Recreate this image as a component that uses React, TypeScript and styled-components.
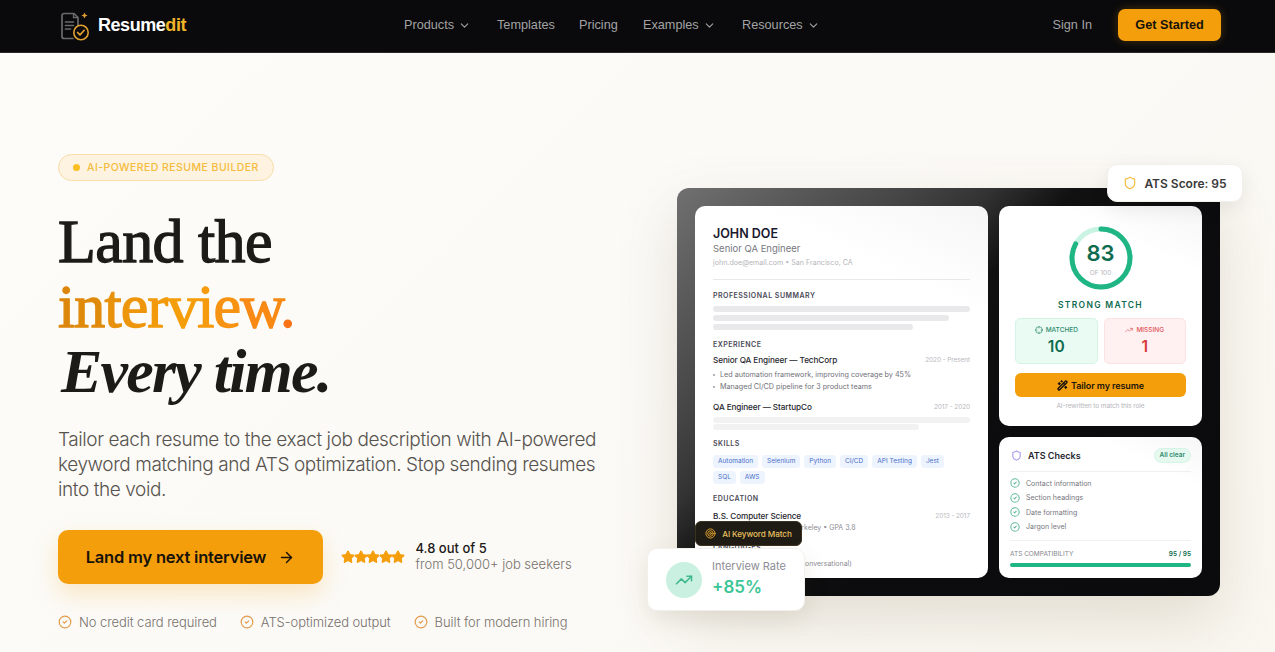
import React from 'react';
import styled, { createGlobalStyle } from 'styled-components';
import { ChevronDown, ArrowRight, Shield, CircleCheck, TrendingUp, Target, Star, Crosshair, Wand2 } from 'lucide-react';

const Global = createGlobalStyle`
  * { box-sizing: border-box; }
  html, body { margin: 0; padding: 0; height: 100%; overflow: hidden; }
  body { font-family: "Inter", "Liberation Sans", sans-serif; background: #fbfaf6; color: #1c1917; }
`;

const Page = styled.div`
  height: 652px;
  overflow: hidden;
  background: linear-gradient(135deg, #fdfcf8 0%, #fbfaf7 50%, #faf7f0 100%);
`;

const Nav = styled.nav`
  height: 53px;
  background: #0a0a0c;
  border-bottom: 1px solid #2a2a2a;
  display: flex;
  align-items: center;
  padding: 0 54px 2px 60px;
  font-family: "Liberation Sans", Arial, sans-serif;
`;

const Logo = styled.div`
  display: flex;
  align-items: center;
  gap: 7px;
  width: 344px;
  font-size: 18px;
  font-weight: 700;
  letter-spacing: -0.45px;
  color: #fff;
  span { color: #f0b429; }
`;

const NavLinks = styled.div`
  display: flex;
  align-items: center;
  flex: 1;
`;

const NavLink = styled.a<{ $w: number }>`
  width: ${p => p.$w}px;
  display: flex;
  align-items: center;
  gap: 4px;
  color: #a3a3a3;
  font-size: 12.7px;
  svg { color: #a3a3a3; }
`;

const SignIn = styled.a`
  color: #a3a3a3;
  font-size: 12.7px;
  margin-right: 26px;
`;

const GetStarted = styled.button`
  width: 103px;
  height: 32px;
  border: 0;
  border-radius: 7px;
  background: #f59e0b;
  color: #16120a;
  font: 700 12.7px "Liberation Sans", Arial, sans-serif;
  box-shadow: 0 0 10px rgba(245, 158, 11, 0.25);
`;

const Hero = styled.main`
  display: flex;
  padding: 101px 55px 0 58px;
`;

const Left = styled.section`
  flex: 0 0 619px;
`;

const Badge = styled.div`
  display: inline-flex;
  align-items: center;
  gap: 7px;
  height: 27px;
  padding: 0 14px;
  border-radius: 14px;
  border: 1px solid #f9dca6;
  background: #fdf3e0;
  color: #f5bb3c;
  font-size: 10.5px;
  font-weight: 500;
  letter-spacing: 0.44px;
`;

const Dot = styled.i`
  width: 7px;
  height: 7px;
  border-radius: 50%;
  background: #fbbf24;
`;

const Title = styled.h1`
  margin: 28px 0 0;
  font-family: "Liberation Serif", "Times New Roman", serif;
  font-size: 62px;
  font-weight: 400;
  line-height: 65px;
  letter-spacing: -0.6px;
  color: #1c1b17;
  -webkit-text-stroke: 1.3px #1c1b17;
`;

const Accent = styled.span`
  letter-spacing: -0.9px;
`;

const Letter = styled.span<{ $c: string }>`
  color: ${p => p.$c};
  -webkit-text-stroke: 1.3px ${p => p.$c};
`;

const Em = styled.em`
  display: inline-block;
  margin-left: 3px;
  font-style: italic;
  font-weight: 700;
  letter-spacing: -1.8px;
  -webkit-text-stroke: 0;
`;

const Lead = styled.p`
  margin: 23px 0 0;
  width: 560px;
  font-size: 19px;
  font-weight: 300;
  line-height: 25px;
  letter-spacing: -0.41px;
  color: #57534e;
`;

const CtaRow = styled.div`
  display: flex;
  align-items: center;
  margin-top: 28px;
`;

const Cta = styled.button`
  width: 265px;
  height: 54px;
  border: 0;
  border-radius: 10px;
  background: #f59e0b;
  color: #17120a;
  font: 600 16.5px "Inter", sans-serif;
  letter-spacing: -0.2px;
  display: flex;
  align-items: center;
  justify-content: center;
  gap: 12px;
  box-shadow: 0 10px 24px rgba(245, 158, 11, 0.22);
`;

const Stars = styled.div`
  display: flex;
  margin: 0 12px 0 18px;
  svg { margin-right: -1.5px; color: #f59e0b; fill: #f59e0b; }
`;

const Rating = styled.div`
  font-size: 13px;
  line-height: 16px;
  padding-bottom: 2px;
  color: #78716c;
  font-weight: 300;
  b { display: block; color: #1c1917; font-weight: 500; }
`;

const Perks = styled.div`
  display: flex;
  gap: 23px;
  margin-top: 30px;
`;

const Perk = styled.div`
  display: flex;
  align-items: center;
  gap: 7px;
  font-size: 13px;
  font-weight: 300;
  letter-spacing: -0.08px;
  color: #78716c;
  svg { color: #e39a4a; }
`;

const Visual = styled.section`
  position: relative;
  flex: 0 0 543px;
  height: 408px;
  margin-top: 34px;
`;

const Panel = styled.div`
  height: 100%;
  border-radius: 12px;
  padding: 18px;
  display: grid;
  grid-template-columns: 293px 203px;
  grid-template-rows: 220px 141px;
  gap: 11px;
  background: linear-gradient(135deg, #707070 0%, #444 25%, #333 33%, #111 42%, #0c0c0e 60%, #0b0b0d 100%);
  box-shadow: 0 24px 60px rgba(120, 100, 60, 0.18);
`;

const Card = styled.div`
  background: linear-gradient(205deg, #f6f6f7, #fff 22%);
  border-radius: 10px;
  overflow: hidden;
`;

const Resume = styled(Card)`
  grid-row: 1 / span 2;
  padding: 20px 18px;
`;

const Name = styled.div`
  font-size: 12.5px;
  font-weight: 600;
  line-height: 15px;
  color: #1a1a2e;
`;

const Role = styled.div`
  font-size: 9.5px;
  margin-top: 1px;
  line-height: 13px;
  color: #78787f;
`;

const Contact = styled.div`
  font-size: 7.1px;
  line-height: 10px;
  margin-top: 3px;
  color: #b5b5ba;
  padding-bottom: 11px;
  border-bottom: 1px solid #e8e8ea;
`;

const Section = styled.div<{ $mt: number }>`
  font-size: 7px;
  font-weight: 600;
  line-height: 10px;
  letter-spacing: 0.5px;
  margin-top: ${p => p.$mt}px;
  color: #4a4a57;
`;

const Bar = styled.div<{ $w: number; $light?: boolean; $mt?: number }>`
  height: 6px;
  width: ${p => p.$w}%;
  border-radius: 3px;
  background: ${p => (p.$light ? '#f2f2f3' : '#e9e9eb')};
  margin-top: ${p => p.$mt ?? 3}px;
`;

const JobRow = styled.div<{ $mt: number }>`
  display: flex;
  justify-content: space-between;
  align-items: center;
  margin-top: ${p => p.$mt}px;
  font-size: 8.2px;
  line-height: 12px;
  font-weight: 500;
  letter-spacing: -0.1px;
  color: #26262e;
  small { font-size: 6.5px; font-weight: 400; color: #b9b9be; }
`;

const Bullet = styled.div<{ $mt: number }>`
  display: flex;
  align-items: center;
  gap: 5px;
  margin-top: ${p => p.$mt}px;
  font-size: 7.2px;
  line-height: 10px;
  color: #707078;
  &::before { content: ''; width: 2px; height: 2px; background: #9a9aa2; border-radius: 50%; }
`;

const Tags = styled.div`
  display: flex;
  flex-wrap: wrap;
  gap: 3px 4px;
  margin-top: 6px;
`;

const Tag = styled.span`
  height: 13px;
  padding: 0 5px;
  border-radius: 3px;
  background: #eef4fe;
  color: #4a6fc9;
  font-size: 6.5px;
  line-height: 13px;
`;

const Sub = styled.div<{ $mt?: number }>`
  font-size: 7px;
  line-height: 10px;
  margin-top: ${p => p.$mt ?? 1}px;
  color: #8d8d94;
`;

const Score = styled(Card)`
  padding: 20px 16px 0;
  display: flex;
  flex-direction: column;
  align-items: center;
`;

const Ring = styled.div`
  position: relative;
  width: 64px;
  height: 64px;
`;

const RingText = styled.div`
  position: absolute;
  inset: 0;
  display: flex;
  flex-direction: column;
  align-items: center;
  justify-content: center;
  b { font-size: 22px; line-height: 24px; margin-top: 3px; font-weight: 600; color: #0f6b50; }
  span { font-size: 6.5px; line-height: 10px; margin-top: 3px; color: #b5b5ba; }
`;

const Strong = styled.div`
  margin-top: 9px;
  font-size: 8.5px;
  line-height: 12px;
  font-weight: 600;
  letter-spacing: 1.3px;
  color: #0f6b50;
`;

const Tiles = styled.div`
  width: 100%;
  display: grid;
  grid-template-columns: 1fr 1fr;
  gap: 6px;
  margin-top: 7px;
`;

const Tile = styled.div<{ $bad?: boolean }>`
  height: 46px;
  border-radius: 5px;
  padding-top: 6px;
  text-align: center;
  border: 1px solid ${p => (p.$bad ? '#fde2e2' : '#d4f5e6')};
  background: ${p => (p.$bad ? '#fff1f1' : '#e9fbf3')};
  color: ${p => (p.$bad ? '#d63a3a' : '#0f6b50')};
  b { display: block; font-size: 15.5px; line-height: 20px; margin-top: 2px; font-weight: 600; }
`;

const TileLabel = styled.div<{ $bad?: boolean }>`
  display: flex;
  align-items: center;
  justify-content: center;
  gap: 3px;
  font-size: 6.5px;
  line-height: 10px;
  font-weight: 500;
  color: ${p => (p.$bad ? '#e0555a' : '#2f8a6c')};
`;

const Tailor = styled.button`
  width: 100%;
  height: 24px;
  margin-top: 9px;
  border: 0;
  border-radius: 6px;
  background: #f59e0b;
  color: #1a140a;
  font: 600 9px "Inter", sans-serif;
  letter-spacing: -0.1px;
  display: flex;
  align-items: center;
  justify-content: center;
  gap: 3px;
`;

const Rewritten = styled.div`
  margin-top: 4px;
  font-size: 6.5px;
  line-height: 10px;
  letter-spacing: -0.1px;
  color: #b5b5ba;
`;

const Checks = styled(Card)`
  padding: 7px 11px 0;
`;

const ChecksHead = styled.div`
  display: flex;
  align-items: center;
  justify-content: space-between;
  height: 23px;
  font-size: 9px;
  font-weight: 600;
  color: #26262e;
  svg { color: #a89af0; margin: 0 6px 0 1px; }
  div { display: flex; align-items: center; }
`;

const Clear = styled.span`
  height: 15px;
  padding: 0 5px;
  border-radius: 8px;
  background: #e6f9f0;
  border: 1px solid #d4f5e6;
  color: #2f8a6c;
  font-size: 6.5px;
  line-height: 13px;
`;

const CheckList = styled.div`
  border-top: 1px solid #f0f0f2;
  margin-top: 4px;
  padding: 4px 0 6px;
  border-bottom: 1px solid #f0f0f2;
`;

const CheckRow = styled.div`
  display: flex;
  align-items: center;
  gap: 6px;
  height: 14.5px;
  font-size: 7px;
  color: #76767e;
  svg { color: #5fb99a; }
`;

const Compat = styled.div`
  display: flex;
  justify-content: space-between;
  margin-top: 8px;
  font-size: 6.5px;
  line-height: 10px;
  color: #85858c;
  b { font-weight: 600; color: #0f6b50; }
`;

const Progress = styled.div`
  height: 4px;
  margin-top: 4px;
  border-radius: 2px;
  background: #1fb584;
`;

const AtsFloat = styled.div`
  position: absolute;
  top: -24px;
  right: -23px;
  width: 136px;
  height: 38px;
  display: flex;
  align-items: center;
  justify-content: center;
  gap: 7px;
  border-radius: 10px;
  background: #fff;
  font-size: 12px;
  font-weight: 600;
  color: #3a3a3a;
  border: 1px solid #f2f0ea;
  box-shadow: 0 6px 20px rgba(0, 0, 0, 0.08);
  svg { color: #f5bb3c; }
`;

const KeywordFloat = styled.div`
  position: absolute;
  left: 18px;
  top: 333px;
  width: 107px;
  height: 25px;
  display: flex;
  align-items: center;
  justify-content: center;
  gap: 6px;
  border-radius: 6px;
  background: #1f1b15;
  border: 1px solid #3d3220;
  color: #e8c060;
  font-size: 8.2px;
  font-weight: 500;
  letter-spacing: -0.1px;
  svg { color: #eaa92c; }
`;

const RateFloat = styled.div`
  position: absolute;
  left: -30px;
  top: 360px;
  width: 158px;
  height: 63px;
  display: flex;
  align-items: center;
  gap: 10px;
  padding-left: 18px;
  border-radius: 10px;
  background: #fff;
  border: 1px solid #f2f0ea;
  box-shadow: 0 8px 24px rgba(90, 70, 30, 0.1);
`;

const RateIcon = styled.div`
  width: 36px;
  height: 36px;
  border-radius: 50%;
  background: #c9f0e0;
  display: flex;
  align-items: center;
  justify-content: center;
  color: #3fb890;
`;

const RateText = styled.div`
  font-size: 11px;
  line-height: 14px;
  padding-bottom: 4px;
  color: #8d8d94;
  b { display: block; margin-top: 4px; font-size: 17px; line-height: 20px; font-weight: 600; color: #3cc596; }
`;

const DocLogo = () => (
  <svg width="31" height="31" viewBox="0 0 31 31" fill="none">
    <path d="M13 28.5H4a2 2 0 0 1-2-2v-21a2 2 0 0 1 2-2h10l4 4v8" stroke="#6a6a6a" strokeWidth="1.7" strokeLinecap="round" strokeLinejoin="round" />
    <path d="M13.5 3.5v4h4.5" stroke="#6a6a6a" strokeWidth="1.3" />
    <path d="M5.5 12h8M5.5 15.5h8M5.5 19h5" stroke="#6a6a6a" strokeWidth="1.7" strokeLinecap="round" />
    <circle cx="21" cy="22.5" r="7.2" fill="#0a0a0c" stroke="#e0a030" strokeWidth="1.6" />
    <path d="M17.6 22.5l2.4 2.4 4.2-4.6" stroke="#e0a030" strokeWidth="1.7" strokeLinecap="round" strokeLinejoin="round" />
    <path d="M24.5 2.5l.9 2.1 2.1.9-2.1.9-.9 2.1-.9-2.1-2.1-.9 2.1-.9z" fill="#e0a030" />
  </svg>
);

const Check = ({ s = 11, w = 2 }: { s?: number; w?: number }) => <CircleCheck size={s} strokeWidth={w} />;

const accent: [string, string][] = [
  ['i', '#dc860c'], ['n', '#e08a0c'], ['t', '#e8910c'], ['e', '#ee960b'], ['r', '#f29a0b'],
  ['v', '#f59e0b'], ['i', '#f69a0e'], ['e', '#f79312'], ['w', '#f88a15'], ['.', '#f97316'],
];

export default function App() {
  return (
    <Page>
      <Global />
      <Nav>
        <Logo><DocLogo /><div>Resume<span>dit</span></div></Logo>
        <NavLinks>
          <NavLink $w={93}>Products <ChevronDown size={13} /></NavLink>
          <NavLink $w={82}>Templates</NavLink>
          <NavLink $w={64}>Pricing</NavLink>
          <NavLink $w={99}>Examples <ChevronDown size={13} /></NavLink>
          <NavLink $w={90}>Resources <ChevronDown size={13} /></NavLink>
        </NavLinks>
        <SignIn>Sign In</SignIn>
        <GetStarted>Get Started</GetStarted>
      </Nav>
      <Hero>
        <Left>
          <Badge><Dot />AI-POWERED RESUME BUILDER</Badge>
          <Title>
            Land the<br />
            <Accent>{accent.map(([ch, c], i) => <Letter key={i} $c={c}>{ch}</Letter>)}</Accent><br />
            <Em>Every time.</Em>
          </Title>
          <Lead>Tailor each resume to the exact job description with AI-powered keyword matching and ATS optimization. Stop sending resumes into the void.</Lead>
          <CtaRow>
            <Cta>Land my next interview <ArrowRight size={17} /></Cta>
            <Stars>{[0, 1, 2, 3, 4].map(i => <Star key={i} size={14} />)}</Stars>
            <Rating><b>4.8 out of 5</b>from 50,000+ job seekers</Rating>
          </CtaRow>
          <Perks>
            <Perk><Check s={14} />No credit card required</Perk>
            <Perk><Check s={14} />ATS-optimized output</Perk>
            <Perk><Check s={14} />Built for modern hiring</Perk>
          </Perks>
        </Left>
        <Visual>
          <Panel>
            <Resume>
              <Name>JOHN DOE</Name>
              <Role>Senior QA Engineer</Role>
              <Contact>john.doe@email.com • San Francisco, CA</Contact>
              <Section $mt={11}>PROFESSIONAL SUMMARY</Section>
              <Bar $w={100} $mt={5} />
              <Bar $w={92} />
              <Bar $w={78} />
              <Section $mt={10}>EXPERIENCE</Section>
              <JobRow $mt={4}>Senior QA Engineer — TechCorp<small>2020 - Present</small></JobRow>
              <Bullet $mt={4}>Led automation framework, improving coverage by 45%</Bullet>
              <Bullet $mt={2}>Managed CI/CD pipeline for 3 product teams</Bullet>
              <JobRow $mt={9}>QA Engineer — StartupCo<small>2017 - 2020</small></JobRow>
              <Bar $w={100} $light $mt={4} />
              <Bar $w={80} $light $mt={1} />
              <Section $mt={9}>SKILLS</Section>
              <Tags>
                {['Automation', 'Selenium', 'Python', 'CI/CD', 'API Testing', 'Jest', 'SQL', 'AWS'].map(t => <Tag key={t}>{t}</Tag>)}
              </Tags>
              <Section $mt={10}>EDUCATION</Section>
              <JobRow $mt={6}>B.S. Computer Science<small>2013 - 2017</small></JobRow>
              <Sub>University of California, Berkeley • GPA 3.8</Sub>
              <Section $mt={10}>LANGUAGES</Section>
              <Sub $mt={6}>English (Native), Spanish (Conversational)</Sub>
            </Resume>
            <Score>
              <Ring>
                <svg width="64" height="64" viewBox="0 0 64 64">
                  <circle cx="32" cy="32" r="29" fill="none" stroke="#c9f3e2" strokeWidth="5" />
                  <circle cx="32" cy="32" r="29" fill="none" stroke="#1fb584" strokeWidth="5" strokeDasharray="151.2 182.2" strokeLinecap="round" transform="rotate(-90 32 32)" />
                </svg>
                <RingText><b>83</b><span>OF 100</span></RingText>
              </Ring>
              <Strong>STRONG MATCH</Strong>
              <Tiles>
                <Tile><TileLabel><Crosshair size={8} />MATCHED</TileLabel><b>10</b></Tile>
                <Tile $bad><TileLabel $bad><TrendingUp size={8} />MISSING</TileLabel><b>1</b></Tile>
              </Tiles>
              <Tailor><Wand2 size={11} strokeWidth={3} />Tailor my resume</Tailor>
              <Rewritten>AI-rewritten to match this role</Rewritten>
            </Score>
            <Checks>
              <ChecksHead>
                <div><Shield size={11} strokeWidth={2.4} />ATS Checks</div>
                <Clear>All clear</Clear>
              </ChecksHead>
              <CheckList>
                {['Contact information', 'Section headings', 'Date formatting', 'Jargon level'].map(t => (
                  <CheckRow key={t}><Check s={10} w={2.5} />{t}</CheckRow>
                ))}
              </CheckList>
              <Compat><span>ATS COMPATIBILITY</span><b>95 / 95</b></Compat>
              <Progress />
            </Checks>
          </Panel>
          <AtsFloat><Shield size={14} />ATS Score: 95</AtsFloat>
          <KeywordFloat><Target size={11} />AI Keyword Match</KeywordFloat>
          <RateFloat>
            <RateIcon><TrendingUp size={18} /></RateIcon>
            <RateText>Interview Rate<b>+85%</b></RateText>
          </RateFloat>
        </Visual>
      </Hero>
    </Page>
  );
}
